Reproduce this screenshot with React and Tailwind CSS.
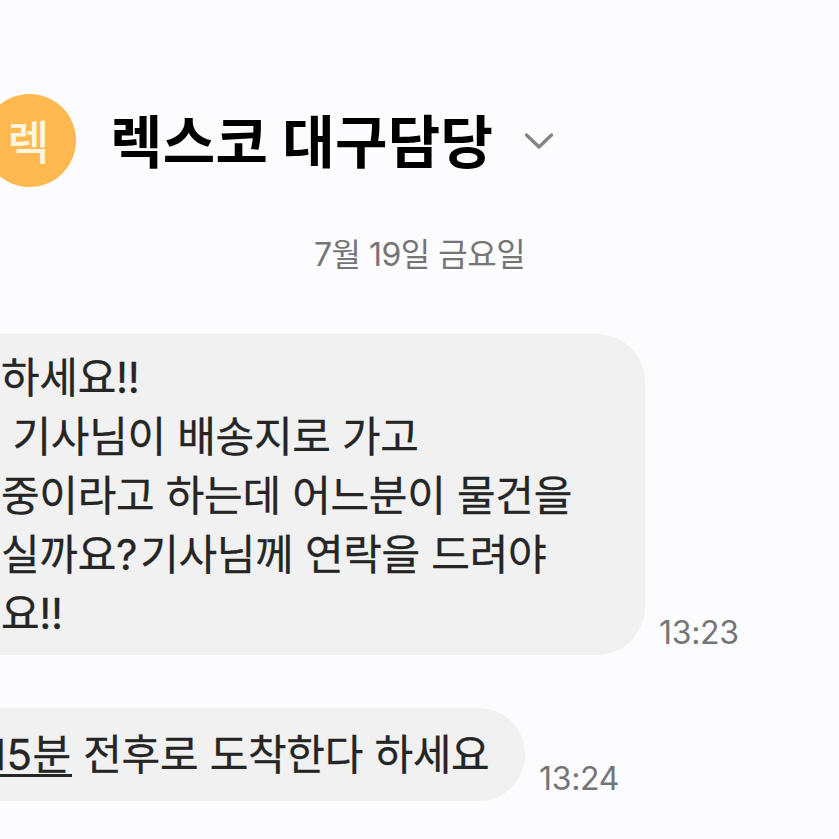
import React from 'react';

const messages = [
  {
    id: 1,
    time: '13:23',
    bubble: 'h-[321px] w-[645px] rounded-r-[48px] pt-[14px] pl-[1px]',
    lines: [
      ['하세요!!'],
      [' 기사님이 배송지로 가고'],
      ['중이라고 하는데 어느분이 물건을'],
      ['실까요?', '기사님께 연락을 드려야'],
      ['요!!'],
    ],
  },
  {
    id: 2,
    time: '13:24',
    bubble: 'h-[93px] w-[525px] rounded-r-[46px] pt-[17px]',
    link: '15분',
    lines: [[' 전후로 도착한다 하세요']],
  },
];

const Header = () => (
  <header className="flex h-[93px] items-center">
    <div className="-ml-[17px] flex h-[93px] w-[93px] shrink-0 items-center justify-center rounded-full bg-[#fdb94f]">
      <span className="mt-[3px] mr-[2px] text-[46px] leading-none font-medium text-[#fff6e0]">렉</span>
    </div>
    <h1 className="mt-[4px] ml-[34px] text-[57px] leading-[80px] font-bold tracking-[0.35px] whitespace-pre text-black">
      렉스코 대구담당
    </h1>
    <svg className="mt-[1px] ml-[31px] h-[18px] w-[30px]" viewBox="0 0 30 18" fill="none">
      <path d="M2.5 3 15 15 27.5 3" stroke="#858585" strokeWidth="3.4" strokeLinecap="round" strokeLinejoin="round" />
    </svg>
  </header>
);

const Message = ({ message }) => (
  <div className="flex items-end">
    <div className={`shrink-0 overflow-hidden bg-[#f1f1f1] ${message.bubble}`}>
      {message.lines.map((parts, i) => (
        <p
          key={i}
          className="text-[42px] leading-[59px] tracking-[-0.32px] whitespace-pre text-[#252525] [-webkit-text-stroke:0.3px_#252525]"
        >
          {message.link && (
            <span className="-ml-[11px] inline-block h-[51px] border-b-[3px] border-[#252525] leading-[57px] tracking-[0.5px]">
              {message.link}
            </span>
          )}
          {parts.map((part, j) => (
            <span key={j} className={j > 0 ? 'ml-[3px]' : ''}>
              {part}
            </span>
          ))}
        </p>
      ))}
    </div>
    <span className="ml-[14px] text-[32px] leading-[44px] tracking-[-0.3px] text-[#757575]">{message.time}</span>
  </div>
);

const App = () => {
  return (
    <div className="h-[839px] w-[839px] overflow-hidden bg-[#fcfcfe] pt-[94px] font-[Inter,'Noto_Sans_CJK_KR',sans-serif]">
      <Header />
      <p className="mt-[44px] h-[46px] text-center text-[32px] leading-[47px] tracking-[-0.5px] text-[#757575]">
        7월 19일 금요일
      </p>
      <div className="mt-[57px] flex flex-col gap-[53px]">
        {messages.map((message) => (
          <Message key={message.id} message={message} />
        ))}
      </div>
    </div>
  );
};

export default App;
